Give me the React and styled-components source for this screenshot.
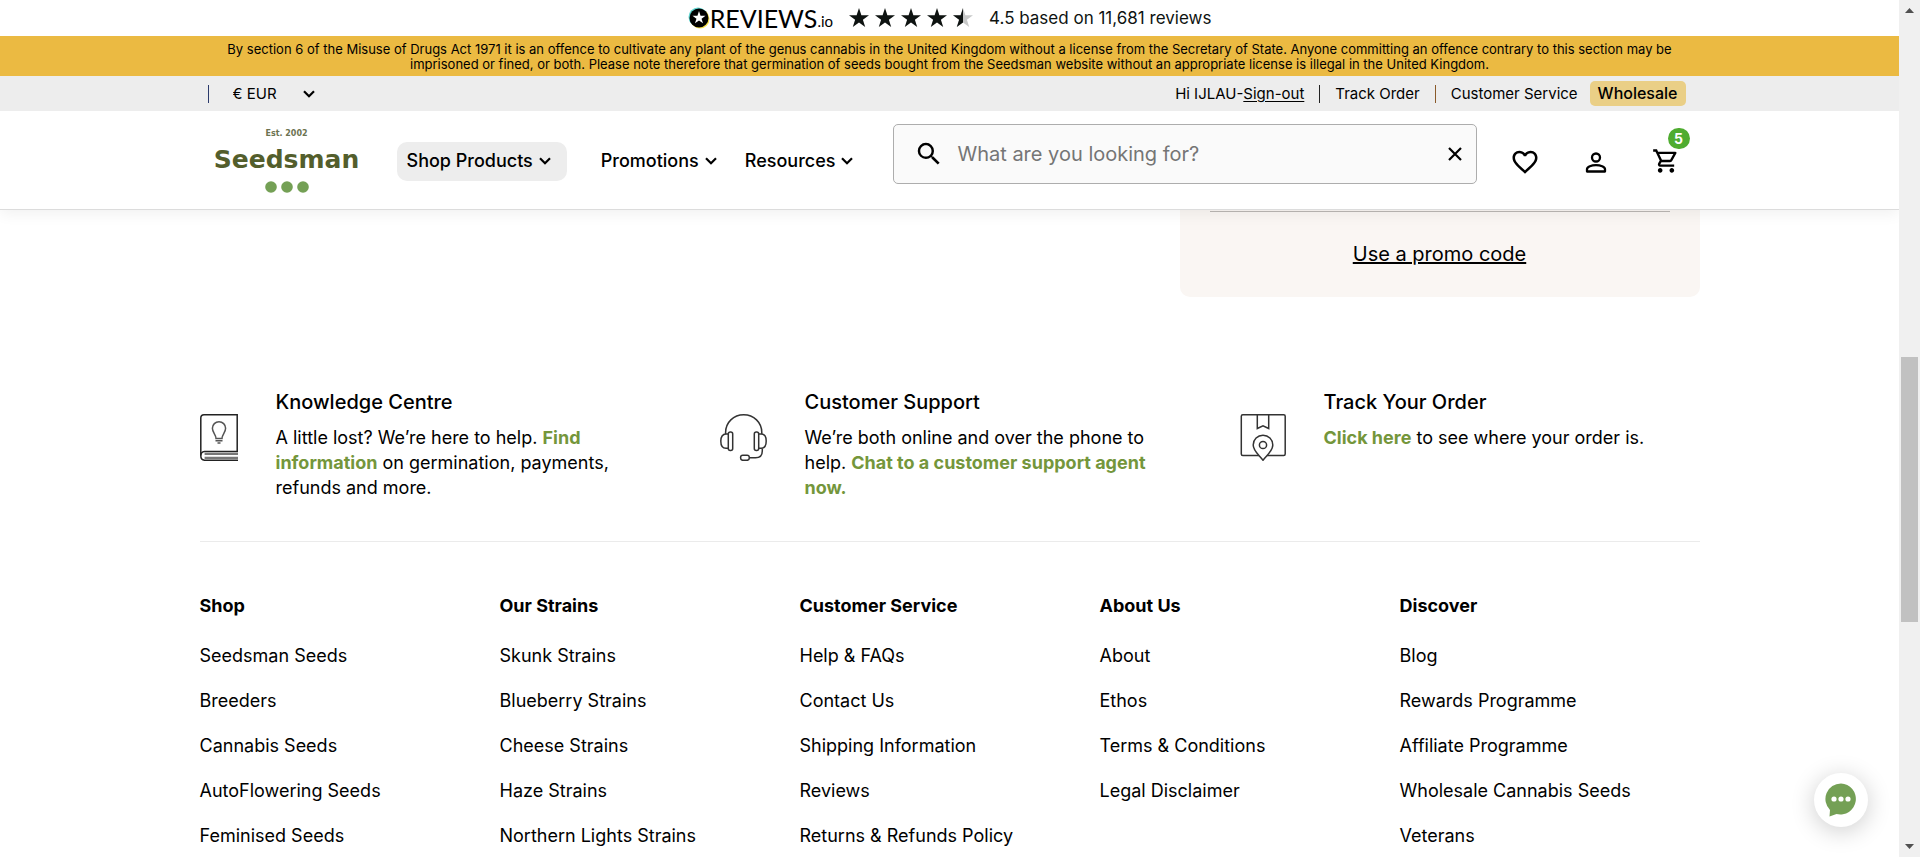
import React from 'react';
import styled, { createGlobalStyle } from 'styled-components';
import { MdOutlineShoppingCart, MdSearch, MdFavoriteBorder } from 'react-icons/md';

const GlobalStyle = createGlobalStyle`
  *, *::before, *::after { box-sizing: border-box; }
  body { margin: 0; background: #fff; color: #000; font-family: Inter, "Liberation Sans", sans-serif; font-size: 18px; }
  a { color: inherit; text-decoration: none; }
  h2, h3, p, ul { margin: 0; padding: 0; }
  ul { list-style: none; }
  button, select, input { font: inherit; color: inherit; }
`;

const Shell = styled.div`
  display: grid;
  grid-template-columns: minmax(0, 1fr) 21px;
  height: 100vh;
  overflow: hidden;
`;

const Page = styled.div`
  display: flex;
  flex-direction: column;
  min-width: 0;
  overflow: hidden;
`;

const Container = styled.div`
  width: 100%;
  max-width: 1500px;
  margin: 0 auto;
`;

const Header = styled.header`
  position: relative;
  z-index: 2;
  flex: none;
  background: #fff;
  border-bottom: 1px solid #dcdcdc;
  box-shadow: 0 4px 14px rgba(0, 0, 0, 0.06);
`;

const ReviewsBar = styled.div`
  display: flex;
  align-items: center;
  justify-content: center;
  height: 36px;
`;

const ReviewsLogo = styled.a`
  display: flex;
  align-items: center;
  font-family: Lato, sans-serif;
  font-size: 25px;
  line-height: 36px;
`;

const ReviewsSuffix = styled.span`
  align-self: flex-end;
  font-size: 15px;
  line-height: 30px;
`;

const Stars = styled.div`
  display: flex;
  gap: 6px;
  margin: 0 16px;
`;

const Rating = styled.span`
  font-size: 17px;
  color: #0e1311;
`;

const Notice = styled.p`
  && { padding: 6px 200px 4px; }
  background: #ebba42;
  font-size: 13px;
  line-height: 15px;
  text-align: center;
`;

const UtilityBar = styled.div`
  background: #ededed;
  font-size: 15px;
`;

const UtilityRow = styled(Container)`
  display: flex;
  align-items: center;
  justify-content: space-between;
  height: 35px;
  padding: 0 14px 0 8px;
`;

const UtilityGroup = styled.div`
  display: flex;
  align-items: center;
  gap: ${({ $gap }) => $gap}px;
`;

const Separator = styled.span`
  width: 1px;
  height: 18px;
  background: ${({ $color }) => $color || '#222'};
`;

const CurrencyBox = styled.label`
  display: grid;
  grid-template-columns: 82px;
  align-items: center;
  > * { grid-area: 1 / 1; }
  svg { justify-self: end; pointer-events: none; }
`;

const CurrencySelect = styled.select`
  appearance: none;
  width: 100%;
  padding: 0;
  border: 0;
  background: transparent;
`;

const SignOut = styled.a`
  && { text-decoration: underline; }
  text-underline-offset: 2px;
`;

const Wholesale = styled.a`
  margin-left: -3px;
  padding: 0 8px;
  border-radius: 5px;
  background: #eacf86;
  font-size: 16px;
  font-weight: 500;
  line-height: 25px;
`;

const MainRow = styled(Container)`
  display: flex;
  align-items: flex-start;
  height: 98px;
  padding: 13px 20px 0 12px;
`;

const Brand = styled.a`
  display: flex;
  flex-direction: column;
  align-items: center;
  width: 150px;
  padding-top: 5px;
  font-family: "DejaVu Sans", sans-serif;
  font-weight: 700;
`;

const BrandSmall = styled.span`
  font-size: 8px;
  line-height: 10px;
  color: #6c7351;
`;

const BrandName = styled.span`
  font-size: 25px;
  line-height: 42px;
  color: #535e2c;
`;

const Nav = styled.nav`
  display: flex;
  margin: 18px 0 0 35px;
`;

const NavButton = styled.button`
  display: flex;
  align-items: center;
  gap: 6px;
  height: 39px;
  margin-right: ${({ $after }) => $after || 0}px;
  padding: 0 ${({ $active }) => ($active ? '16px 1px 10px' : '0 1px')};
  border: 0;
  border-radius: 10px;
  background: ${({ $active }) => ($active ? '#ededed' : 'transparent')};
  font-size: 18px;
  font-weight: 500;
  line-height: 22px;
  cursor: pointer;
`;

const SearchBox = styled.form`
  display: flex;
  align-items: center;
  flex: 1;
  height: 60px;
  margin-left: 40px;
  padding: 0 14px 0 20px;
  border: 1px solid #adadad;
  border-radius: 5px;
  background: #fafafa;
`;

const SearchInput = styled.input`
  flex: 1;
  min-width: 0;
  margin-left: 13px;
  padding: 0;
  border: 0;
  outline: 0;
  background: transparent;
  font-size: 20px;
  &::placeholder { color: #757575; opacity: 1; }
`;

const IconButton = styled.button`
  position: relative;
  display: flex;
  padding: 0;
  border: 0;
  background: transparent;
  cursor: pointer;
`;

const Actions = styled.div`
  display: flex;
  gap: 42px;
  margin: 23px 0 0 33px;
`;

const Badge = styled.span`
  position: absolute;
  top: -19px;
  right: -10px;
  width: 22px;
  border-radius: 11px;
  background: #4fac30;
  color: #fff;
  font-size: 14px;
  font-weight: 700;
  line-height: 21px;
  text-align: center;
`;

const PromoRow = styled(Container)`
  display: flex;
  justify-content: flex-end;
`;

const PromoCard = styled.section`
  width: 520px;
  padding: 1px 30px 0;
  border-radius: 0 0 10px 10px;
  background: #faf6f3;
`;

const PromoInner = styled.div`
  display: flex;
  justify-content: center;
  padding: 30px 0;
  border-top: 1px solid #bbb7b4;
`;

const PromoLink = styled.a`
  && { text-decoration: underline; }
  font-size: 20px;
  line-height: 25px;
`;

const Features = styled(Container)`
  display: grid;
  grid-template-columns: repeat(3, 1fr);
  gap: 60px;
  padding: 93px 0 41px;
  border-bottom: 1px solid #ebebeb;
`;

const Feature = styled.article`
  display: flex;
  align-items: flex-start;
  gap: 38px;
  > svg { flex: none; margin-top: 24px; }
`;

const FeatureText = styled.div`
  padding-right: 20px;
`;

const FeatureTitle = styled.h2`
  margin-bottom: 10px;
  font-size: 20px;
  font-weight: 500;
  line-height: 25px;
`;

const FeatureCopy = styled.p`
  line-height: 25px;
  a { color: #74963b; font-weight: 700; }
`;

const FooterColumns = styled(Container)`
  display: grid;
  grid-template-columns: repeat(5, 1fr);
  padding-top: 51px;
`;

const ColumnTitle = styled.h3`
  margin-bottom: 15px;
  font-size: 18px;
  font-weight: 700;
  line-height: 25px;
`;

const ColumnLink = styled.li`
  line-height: 45px;
`;

const ScrollTrack = styled.div`
  display: grid;
  grid-template-rows: 5px 344fr 265fr 222fr 5px;
  justify-items: center;
  padding: 8px 0;
  background: #f0f0f0;
`;

const ScrollThumb = styled.div`
  grid-row: 3;
  width: 17px;
  background: #c1c1c1;
`;

const ArrowSlot = styled.div`
  grid-row: ${({ $row }) => $row};
  display: flex;
`;

const ChatButton = styled.button`
  position: fixed;
  right: 52px;
  bottom: 30px;
  z-index: 3;
  display: flex;
  align-items: center;
  justify-content: center;
  width: 54px;
  height: 54px;
  padding: 0;
  border: 0;
  border-radius: 50%;
  background: #fff;
  box-shadow: 0 4px 24px rgba(0, 0, 0, 0.2);
  cursor: pointer;
`;

const Chevron = () => (
  <svg width="12" height="8" viewBox="0 0 12 8" fill="none" stroke="currentColor" strokeWidth="2.2" aria-hidden="true">
    <path d="M1 1.2 6 6.2 11 1.2" />
  </svg>
);

const STAR = 'M10 0 12.4 7.2H20L13.9 11.8 16.2 19 10 14.6 3.8 19 6.1 11.8 0 7.2H7.6Z';

const Star = ({ half }) => (
  <svg width="20" height="20" viewBox="0 0 20 20" aria-hidden="true">
    <path d={STAR} fill={half ? '#c8c9c9' : '#0e1311'} />
    {half && <path d="M10 0V14.6L3.8 19 6.1 11.8 0 7.2H7.6Z" fill="#0e1311" />}
  </svg>
);

const ReviewsMark = () => (
  <svg width="22" height="24" viewBox="0 0 22 24" aria-hidden="true">
    <circle cx="10" cy="11" r="9.5" fill="#5fd5d0" />
    <circle cx="12" cy="13" r="9.5" fill="#f5e04a" />
    <circle cx="11" cy="12" r="9.5" fill="#000" />
    <path transform="translate(4.5 5) scale(.65)" d={STAR} fill="#fff" />
  </svg>
);

const BrandDots = () => (
  <svg width="44" height="12" viewBox="0 0 44 12" fill="#74a055" aria-hidden="true">
    <circle cx="6" cy="6" r="5.8" />
    <circle cx="22" cy="6" r="5.8" />
    <circle cx="38" cy="6" r="5.8" />
  </svg>
);

const PersonIcon = () => (
  <svg width="28" height="28" viewBox="0 0 28 28" fill="none" stroke="#000" strokeWidth="2.3" aria-hidden="true">
    <circle cx="14" cy="10.5" r="4" />
    <path d="M5 24.5V22.2C5 19.6 9.6 18.2 14 18.2S23 19.6 23 22.2V24.5Z" strokeLinejoin="round" />
  </svg>
);

const CloseIcon = () => (
  <svg width="14" height="14" viewBox="0 0 14 14" stroke="#000" strokeWidth="2.2" aria-hidden="true">
    <path d="M1 1 13 13M13 1 1 13" />
  </svg>
);

const BookIcon = () => (
  <svg width="38" height="47" viewBox="0 0 38 47" fill="none" stroke="#222" strokeWidth="1.5" aria-hidden="true">
    <path d="M37.2 37.4V.8H4Q.8.8.8 4V41.5" />
    <path d="M38 37.4H4.5Q.8 37.6.8 41.8T4.5 46.2H38" />
    <path d="M38 39.8H4.6M38 43.8H4.6" stroke="#777" strokeWidth="2.2" />
    <path d="M16 24.5C16 20.5 12.4 18.6 12.4 14.3A6.6 6.6 0 0 1 25.6 14.3C25.6 18.6 22 20.5 22 24.5ZM15.5 26.8H22.5M17.5 29H20.5" stroke="#555" />
  </svg>
);

const HeadsetIcon = () => (
  <svg width="47" height="47" viewBox="0 0 47 47" fill="none" stroke="#333" strokeWidth="1.5" aria-hidden="true">
    <path d="M5.6 20V18.5C5.6 8.5 13.6.8 23.7.8S41.8 8.5 41.8 18.5V20" />
    <rect x="8.3" y="18" width="4.4" height="18.5" rx="2" />
    <rect x="34.3" y="18" width="4.4" height="18.5" rx="2" />
    <path d="M8.3 20H6C2.5 20 .8 23 .8 27S2.5 34.3 6 34.3H8.3" />
    <path d="M38.7 20H41C44.5 20 46.2 23 46.2 27S44.5 34.3 41 34.3H38.7" />
    <path d="M42.3 34.5V37C42.3 41.5 40 43.8 35.5 43.8H29.3" />
    <rect x="20.6" y="41.3" width="8.7" height="5" rx="2.2" />
  </svg>
);

const ParcelIcon = () => (
  <svg width="46" height="47" viewBox="0 0 46 47" fill="none" stroke="#333" strokeWidth="1.5" aria-hidden="true">
    <rect x="1.3" y=".8" width="43.9" height="40.6" rx="1.5" />
    <path d="M17.3.8V14.5L23 11.8 28.7 14.5V.8" />
    <path d="M23 46.2C18.5 40.5 13.2 36.8 13.2 31A9.8 9.8 0 0 1 32.8 31C32.8 36.8 27.5 40.5 23 46.2Z" fill="#fff" />
    <circle cx="23" cy="31" r="3.6" />
  </svg>
);

const ChatIcon = () => (
  <svg width="32" height="34" viewBox="0 0 32 34" aria-hidden="true">
    <path d="M16 .5A15.5 15.5 0 1 1 11.5 31L4.5 33.5 5 27A15.5 15.5 0 0 1 16 .5Z" fill="#74a055" />
    <g fill="#fff">
      <circle cx="9" cy="16" r="2.6" />
      <circle cx="16" cy="16" r="2.6" />
      <circle cx="23" cy="16" r="2.6" />
    </g>
  </svg>
);

const ScrollArrow = ({ down }) => (
  <svg width="9" height="5" viewBox="0 0 9 5" fill="#505050" aria-hidden="true">
    <path d={down ? 'M0 0H9L4.5 5Z' : 'M0 5H9L4.5 0Z'} />
  </svg>
);

const COLUMNS = [
  ['Shop', ['Seedsman Seeds', 'Breeders', 'Cannabis Seeds', 'AutoFlowering Seeds', 'Feminised Seeds']],
  ['Our Strains', ['Skunk Strains', 'Blueberry Strains', 'Cheese Strains', 'Haze Strains', 'Northern Lights Strains']],
  ['Customer Service', ['Help & FAQs', 'Contact Us', 'Shipping Information', 'Reviews', 'Returns & Refunds Policy']],
  ['About Us', ['About', 'Ethos', 'Terms & Conditions', 'Legal Disclaimer']],
  ['Discover', ['Blog', 'Rewards Programme', 'Affiliate Programme', 'Wholesale Cannabis Seeds', 'Veterans']],
];

export default function App() {
  return (
    <Shell>
      <GlobalStyle />
      <Page>
        <Header>
          <ReviewsBar>
            <ReviewsLogo href="#reviews">
              <ReviewsMark />
              REVIEWS<ReviewsSuffix>.io</ReviewsSuffix>
            </ReviewsLogo>
            <Stars>
              <Star /><Star /><Star /><Star /><Star half />
            </Stars>
            <Rating>4.5 based on 11,681 reviews</Rating>
          </ReviewsBar>
          <Notice>
            By section 6 of the Misuse of Drugs Act 1971 it is an offence to cultivate any plant of the genus cannabis in the United Kingdom without a license from the Secretary of State. Anyone committing an offence contrary to this section may be imprisoned or fined, or both. Please note therefore that germination of seeds bought from the Seedsman website without an appropriate license is illegal in the United Kingdom.
          </Notice>
          <UtilityBar>
            <UtilityRow>
              <UtilityGroup $gap={24}>
                <Separator $color="#2b3a6b" />
                <CurrencyBox>
                  <CurrencySelect aria-label="Currency" defaultValue="EUR">
                    <option value="EUR">€ EUR</option>
                  </CurrencySelect>
                  <Chevron />
                </CurrencyBox>
              </UtilityGroup>
              <UtilityGroup $gap={15}>
                <span>Hi IJLAU-<SignOut href="#sign-out">Sign-out</SignOut></span>
                <Separator />
                <a href="#track">Track Order</a>
                <Separator $color="#8a5a2a" />
                <a href="#service">Customer Service</a>
                <Wholesale href="#wholesale">Wholesale</Wholesale>
              </UtilityGroup>
            </UtilityRow>
          </UtilityBar>
          <MainRow>
            <Brand href="#home">
              <BrandSmall>Est. 2002</BrandSmall>
              <BrandName>Seedsman</BrandName>
              <BrandDots />
            </Brand>
            <Nav>
              <NavButton $active $after={34}>Shop Products <Chevron /></NavButton>
              <NavButton $after={28}>Promotions <Chevron /></NavButton>
              <NavButton>Resources <Chevron /></NavButton>
            </Nav>
            <SearchBox role="search">
              <MdSearch size={30} aria-hidden="true" />
              <SearchInput type="text" aria-label="Search" placeholder="What are you looking for?" />
              <IconButton type="button" aria-label="Clear search"><CloseIcon /></IconButton>
            </SearchBox>
            <Actions>
              <IconButton aria-label="Wishlist"><MdFavoriteBorder size={30} /></IconButton>
              <IconButton aria-label="Account"><PersonIcon /></IconButton>
              <IconButton aria-label="Cart"><MdOutlineShoppingCart size={28} /><Badge>5</Badge></IconButton>
            </Actions>
          </MainRow>
        </Header>
        <main>
          <PromoRow>
            <PromoCard>
              <PromoInner><PromoLink href="#promo">Use a promo code</PromoLink></PromoInner>
            </PromoCard>
          </PromoRow>
          <Features>
            <Feature>
              <BookIcon />
              <FeatureText>
                <FeatureTitle>Knowledge Centre</FeatureTitle>
                <FeatureCopy>A little lost? We’re here to help. <a href="#find">Find information</a> on germination, payments, refunds and more.</FeatureCopy>
              </FeatureText>
            </Feature>
            <Feature>
              <HeadsetIcon />
              <FeatureText>
                <FeatureTitle>Customer Support</FeatureTitle>
                <FeatureCopy>We’re both online and over the phone to help. <a href="#chat">Chat to a customer support agent now.</a></FeatureCopy>
              </FeatureText>
            </Feature>
            <Feature>
              <ParcelIcon />
              <FeatureText>
                <FeatureTitle>Track Your Order</FeatureTitle>
                <FeatureCopy><a href="#order">Click here</a> to see where your order is.</FeatureCopy>
              </FeatureText>
            </Feature>
          </Features>
        </main>
        <footer>
          <FooterColumns>
            {COLUMNS.map(([title, links]) => (
              <div key={title}>
                <ColumnTitle>{title}</ColumnTitle>
                <ul>
                  {links.map((link) => (
                    <ColumnLink key={link}><a href="#footer">{link}</a></ColumnLink>
                  ))}
                </ul>
              </div>
            ))}
          </FooterColumns>
        </footer>
      </Page>
      <ScrollTrack>
        <ArrowSlot $row={1}><ScrollArrow /></ArrowSlot>
        <ScrollThumb />
        <ArrowSlot $row={5}><ScrollArrow down /></ArrowSlot>
      </ScrollTrack>
      <ChatButton aria-label="Open chat"><ChatIcon /></ChatButton>
    </Shell>
  );
}
